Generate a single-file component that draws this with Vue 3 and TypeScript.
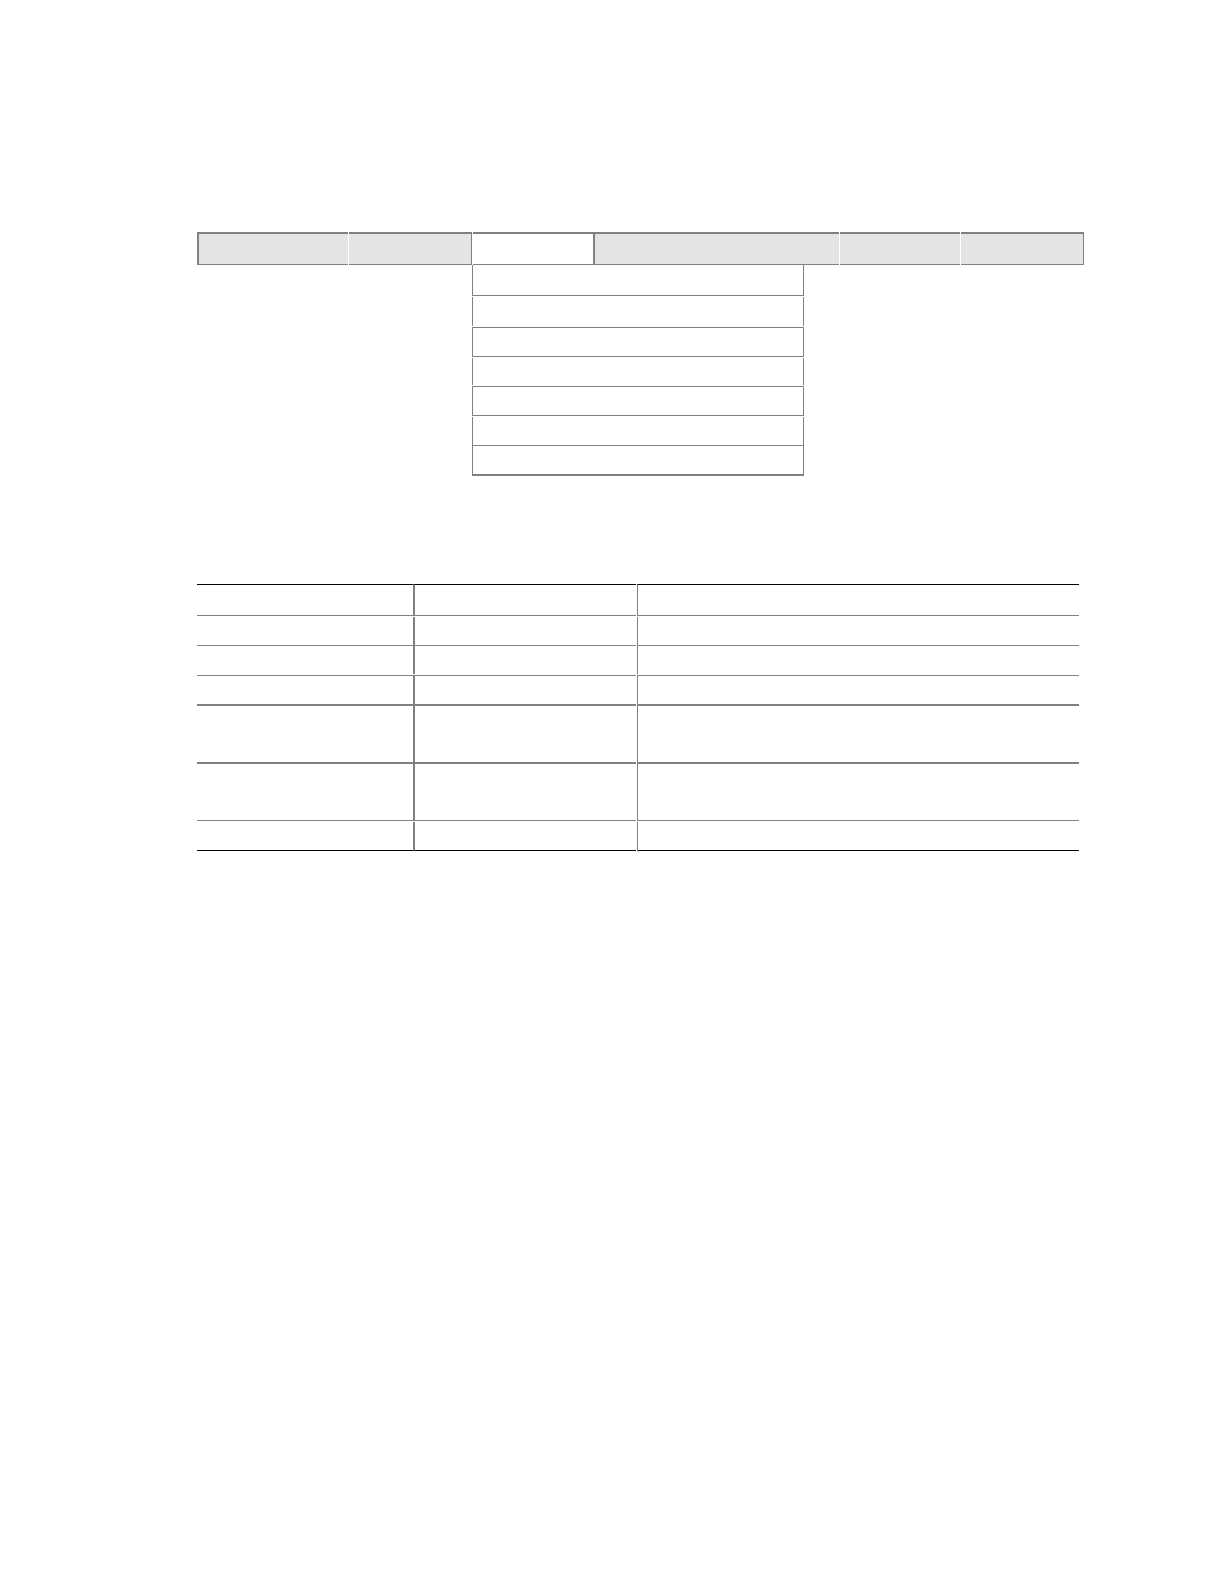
<script setup lang="ts">
interface MenuTab {
  active: boolean
  kind: string
}

const tabs: MenuTab[] = [
  { active: false, kind: 'first split' },
  { active: false, kind: 'closed split' },
  { active: true, kind: '' },
  { active: false, kind: 'opened split' },
  { active: false, kind: 'split' },
  { active: false, kind: 'closed' },
]

// Ruling of each drop-down entry, top to bottom
const entries: string[] = ['opening', 'open', 'ruled', 'short', 'ruled', 'joined', 'last']

// Ruling of each body row of the table
const rows: string[] = ['under', 'plain', 'over', 'tall', 'tall under-gap', 'end']
</script>

<template>
  <main class="page">
    <nav class="menu">
      <ul class="bar">
        <li v-for="(tab, i) in tabs" :key="i" :class="['tab', tab.kind, { active: tab.active }]"></li>
      </ul>
      <ul class="dropdown">
        <li v-for="(entry, i) in entries" :key="i" :class="['entry', entry]"></li>
      </ul>
    </nav>

    <table class="grid">
      <thead>
        <tr class="row head">
          <th scope="col"></th>
          <th scope="col"></th>
          <th scope="col"></th>
        </tr>
      </thead>
      <tbody>
        <tr v-for="(row, i) in rows" :key="i" :class="['row', row]">
          <td></td>
          <td></td>
          <td></td>
        </tr>
      </tbody>
    </table>
  </main>
</template>

<style>
body {
  margin: 0;
  background: #fff;
}
</style>

<style scoped>
.page,
.page * {
  box-sizing: border-box;
}

.page {
  padding: 232px 140px 120px 197px;
  font-family: "Liberation Sans", Arial, sans-serif;
  font-size: 14px;
}

.bar,
.dropdown {
  margin: 0;
  padding: 0;
  list-style: none;
}

.bar {
  display: grid;
  grid-template-columns: 152fr 124fr 120fr 247fr 121fr 123fr;
}

.tab {
  height: 33px;
  background: #e4e4e4;
  border: 0 solid #808080;
  border-top-width: 2px;
  border-bottom-width: 1px;
}

.tab.first,
.tab.opened {
  border-left-width: 2px;
}

.tab.closed {
  border-right-width: 1px;
}

.tab.split {
  margin-right: 1px;
}

.tab.active {
  background: #fff;
}

.dropdown {
  width: 332px;
  margin-left: 31%;
}

.entry {
  height: 30px;
  margin-bottom: 1px;
  border: 0 solid #808080;
  border-left-width: 1px;
  border-right-width: 1px;
}

.entry.opening {
  height: 31px;
  border-bottom-width: 1px;
}

.entry.open {
  height: 29px;
}

.entry.ruled {
  border-top-width: 1px;
  border-bottom-width: 1px;
}

.entry.short {
  height: 27px;
}

.entry.joined {
  height: 28px;
  margin-bottom: 0;
}

.entry.last {
  height: 31px;
  margin-bottom: 0;
  border-top-width: 1px;
  border-bottom-width: 2px;
}

.grid {
  display: block;
  margin: 108px 5px 0 0;
}

.grid thead,
.grid tbody {
  display: block;
}

.row {
  display: grid;
  grid-template-columns: 216fr 224fr 442fr;
  height: 29px;
}

.row th,
.row td {
  padding: 0;
  border: 0 solid #808080;
}

.row > :nth-child(2) {
  margin-right: 1px;
  border-left-width: 2px;
}

.row > :nth-child(3) {
  border-left-width: 1px;
}

.row.head {
  height: 32px;
  margin-bottom: 1px;
}

.row.head th {
  border-top: 1px solid #000;
  border-bottom-width: 1px;
}

.row.under td {
  border-bottom-width: 1px;
}

.row.plain {
  height: 28px;
  margin-bottom: 1px;
}

.row.over td {
  border-top-width: 1px;
}

.row.tall {
  height: 58px;
}

.row.tall td {
  border-top-width: 2px;
}

.row.under-gap {
  height: 59px;
  margin-bottom: 1px;
}

.row.under-gap td {
  border-bottom-width: 1px;
}

.row.end td {
  border-bottom: 1px solid #000;
}
</style>
